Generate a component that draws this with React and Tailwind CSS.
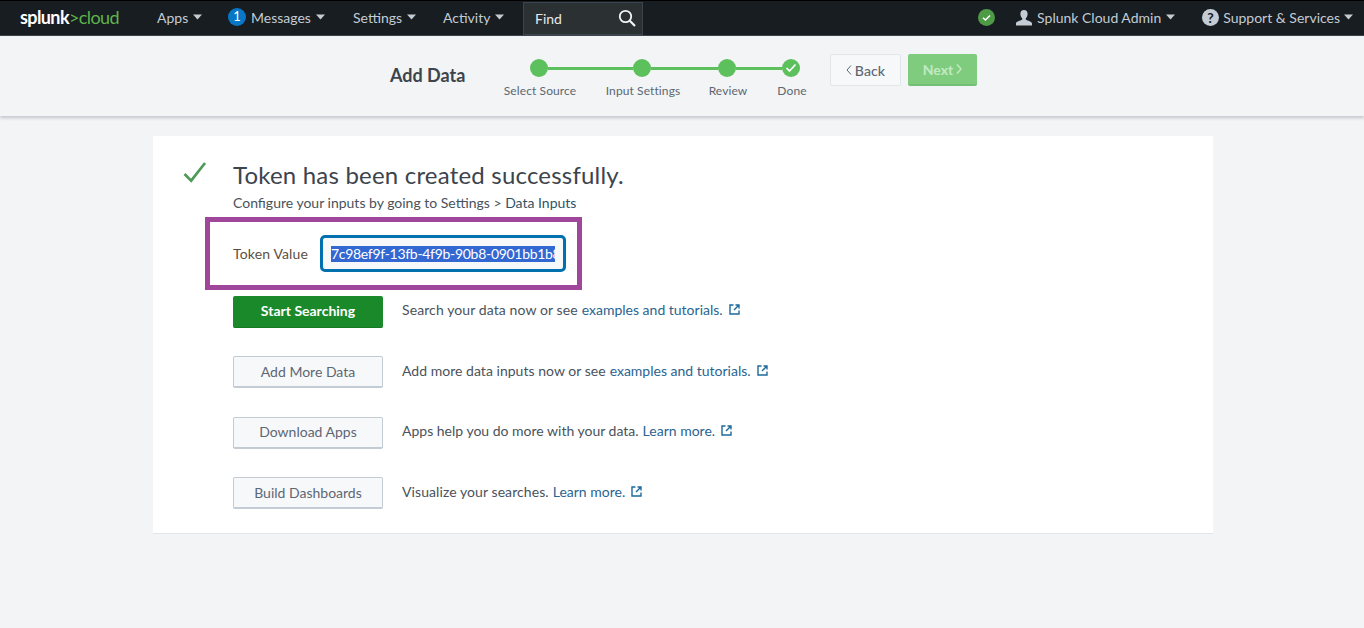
import React from 'react';

const Caret = ({ className = 'ml-[5px]' }) => (
  <svg width="9" height="6" viewBox="0 0 9 6" className={`shrink-0 ${className}`}>
    <path d="M0 0.5h9L4.5 5.5z" fill="currentColor" />
  </svg>
);

const ExternalIcon = () => (
  <svg width="11" height="11" viewBox="0 0 11 11" className="shrink-0 text-[#1c6a9c]" fill="none" stroke="currentColor">
    <path d="M4.5 1H1v9h9V6.5" strokeWidth="1.4" />
    <path d="M6.5 1h3.5v3.5M10 1L5 6" strokeWidth="1.4" />
  </svg>
);

const NavItem = ({ children, className = '', caret }) => (
  <div className={`flex shrink-0 items-center text-[14px] text-[#c3cbd4] ${className}`}>
    {children}
    <Caret className={caret} />
  </div>
);

const NavBar = () => (
  <div className="flex h-[36px] items-center bg-[#171d21] border-t border-t-black border-b border-b-[#3c444d] pl-[20px] pr-[11px]">
    <div className="flex items-center pb-[2px]">
      <div className="w-[137px] text-[18px] font-bold tracking-[-0.6px] text-white leading-none">
        splunk<span className="font-normal text-[#5fb34a]">&gt;cloud</span>
      </div>
      <NavItem className="w-[71px]">Apps</NavItem>
      <NavItem className="w-[125px]">
        <span className="mr-[5px] flex h-[18px] w-[18px] items-center justify-center rounded-full bg-[#0877c5] text-[13px] text-white">1</span>
        Messages
      </NavItem>
      <NavItem className="w-[90px]">Settings</NavItem>
      <NavItem className="w-[80px]">Activity</NavItem>
    </div>
    <div className="flex h-[33px] w-[120px] items-center justify-between border border-[#3c444d] bg-[#2b3033] pl-[11px] pr-[6px] text-[14px] text-[#e6e9ec]">
      Find
      <svg width="18" height="18" viewBox="0 0 18 18" fill="none" stroke="#f2f4f5" strokeWidth="1.8">
        <circle cx="7.5" cy="7.5" r="5.7" />
        <path d="M11.8 11.8L17 17" strokeWidth="2.2" />
      </svg>
    </div>
    <div className="flex-1" />
    <div className="flex items-center pb-[1px]">
      <svg width="17" height="17" viewBox="0 0 17 17" className="mr-[21px]">
        <circle cx="8.5" cy="8.5" r="8.5" fill="#4f9a47" />
        <path d="M5 8.8l2.4 2.3L12 6.4" fill="none" stroke="#fff" strokeWidth="1.4" />
      </svg>
      <svg width="16" height="16" viewBox="0 0 16 16" className="mr-[5px] text-[#c3cbd4]" fill="currentColor">
        <path d="M8 0c2.3 0 3.6 1.7 3.6 3.9 0 1.8-.8 3.5-1.8 4.3v1.2c0 .8 5.4 1.500 6.200 3.700V15.500H0V13.100c.8-2.200 6.200-2.900 6.200-3.700V8.200C5.200 7.400 4.400 5.700 4.400 3.900 4.400 1.700 5.700 0 8 0z" />
      </svg>
      <NavItem className="mr-[27px] pb-[1px]">Splunk Cloud Admin</NavItem>
      <svg width="17" height="17" viewBox="0 0 17 17" className="mr-[4px]">
        <circle cx="8.5" cy="8.500" r="8.500" fill="#c3cbd4" />
        <text x="8.500" y="13.500" textAnchor="middle" fontSize="14" fontWeight="700" fontFamily="Lato, sans-serif" fill="#171d21">?</text>
      </svg>
      <NavItem caret="ml-[4px]" className="pb-[1px]">Support &amp; Services</NavItem>
    </div>
  </div>
);

const Step = ({ label, done }) => (
  <div className="flex w-[18px] flex-col items-center">
    <div className="flex h-[18px] w-[18px] shrink-0 items-center justify-center rounded-full bg-[#5cc05c]">
      {done && (
        <svg width="12" height="10" viewBox="0 0 12 10" fill="none" stroke="#fff" strokeWidth="1.700">
          <path d="M1.500 5l3 3L10.500 1.500" />
        </svg>
      )}
    </div>
    <div className="mt-[6px] whitespace-nowrap pl-[2px] text-[12px] leading-[16px] tracking-[0.1px] text-[#5c6773]">{label}</div>
  </div>
);

const Line = ({ className }) => <div className={`mt-[7.500px] h-[3px] bg-[#5cc05c] ${className}`} />;

const SubHeader = () => (
  <div className="flex h-[80px] items-start bg-[#f2f4f5] pl-[390px] shadow-[0_2px_3px_rgba(60,68,90,0.25)]">
    <div className="mt-[27px] w-[140px] text-[18px] font-bold leading-[24px] text-[#3c444d]">Add Data</div>
    <div className="mt-[23px] flex w-[300px]">
      <Step label="Select Source" />
      <Line className="w-[85px]" />
      <Step label="Input Settings" />
      <Line className="w-[67px]" />
      <Step label="Review" />
      <Line className="w-[46px]" />
      <Step label="Done" done />
    </div>
    <button className="mt-[18px] flex h-[32px] w-[71px] items-center justify-center rounded-[2px] border border-[#e1e6eb] bg-[#f7f8fa] text-[14px] font-medium tracking-[0.1px] text-[#5c6773]">
      <svg width="6" height="10" viewBox="0 0 6 10" fill="none" stroke="currentColor" className="mr-[3px]"><path d="M5 0.500L1 5l4 4.500" /></svg>
      Back
    </button>
    <button className="ml-[7px] mt-[18px] flex h-[32px] w-[69px] items-center justify-center rounded-[2px] bg-[#7fcc7f] border-b-2 border-b-[#73bf73] text-[14px] font-bold text-[#c3eac3]">
      Next
      <svg width="6" height="10" viewBox="0 0 6 10" fill="none" stroke="currentColor" strokeWidth="1.400" className="ml-[3px]"><path d="M1 0.500L5 5 1 9.500" /></svg>
    </button>
  </div>
);

const ActionRow = ({ label, primary, text, link, track }) => (
  <div className="flex h-[32px] items-center">
    <button
      className={
        primary
          ? 'h-[32px] w-[150px] rounded-[2px] border-b border-b-[#147a24] bg-[#1a8929] pb-[1px] text-[14px] font-bold text-white'
          : 'h-[32px] w-[150px] rounded-[2px] border border-[#c3cbd4] border-b-2 bg-[#f7f8fa] pb-[1px] text-[14px] text-[#5c6773]'
      }
    >
      {label}
    </button>
    <div className="ml-[19px] mb-[4px] flex items-center text-[14px] text-[#4a525b]">
      <span className={track}>{text}</span>
      <span className="ml-[4px] mr-[6px] text-[#2a6490]">{link}</span>
      <ExternalIcon />
    </div>
  </div>
);

const Card = () => (
  <div className="mx-[153px] mt-[20px] h-[398px] w-[1060px] bg-white border-b border-b-[#e1e6eb] pl-[30px] pt-[25px]">
    <div className="flex">
      <svg width="24" height="21" viewBox="0 0 24 22" fill="none" stroke="#4f9a57" strokeWidth="2.800" className="mt-[1px] shrink-0">
        <path d="M1 12.500l7 7L22.500 1" />
      </svg>
      <div className="ml-[26px]">
        <div className="text-[24px] leading-[28px] tracking-[0.2px] text-[#3c444d]">Token has been created successfully.</div>
        <div className="mt-[5px] text-[14px] leading-[18px] text-[#4a525b]">
          Configure your inputs by going to Settings &gt; <span className="text-[#2f5468]">Data Inputs</span>
        </div>
      </div>
    </div>
    <div className="ml-[22px] mt-[5px] flex h-[73px] w-[377px] items-center border-[5px] border-[#a0469b] pb-[1px] pl-[23px]">
      <span className="w-[87px] text-[14px] tracking-[0.15px] text-[#5c4f42]">Token Value</span>
      <div className="flex h-[37px] w-[246px] items-center overflow-hidden rounded-[5px] border-[3px] border-[#0071ae] bg-[#f7f8fa] pl-[8px] pr-[8px]">
        <span className="mt-[1px] overflow-hidden whitespace-nowrap bg-[#3367d1] text-[14px] leading-[16px] tracking-[-0.3px] text-white">7c98ef9f-13fb-4f9b-90b8-0901bb1b8</span>
      </div>
    </div>
    <div className="ml-[50px] mt-[5.750px] flex flex-col gap-[28.500px]">
      <ActionRow primary label="Start Searching" text="Search your data now or see" link="examples and tutorials." track="tracking-[0.1px]" />
      <ActionRow label="Add More Data" text="Add more data inputs now or see" link="examples and tutorials." track="tracking-[0.03px]" />
      <ActionRow label="Download Apps" text="Apps help you do more with your data." link="Learn more." />
      <ActionRow label="Build Dashboards" text="Visualize your searches." link="Learn more." track="tracking-[0.08px]" />
    </div>
  </div>
);

export default function App() {
  return (
    <div className="min-h-[628px] bg-[#f2f4f5] font-['Lato',sans-serif]">
      <NavBar />
      <SubHeader />
      <Card />
    </div>
  );
}
